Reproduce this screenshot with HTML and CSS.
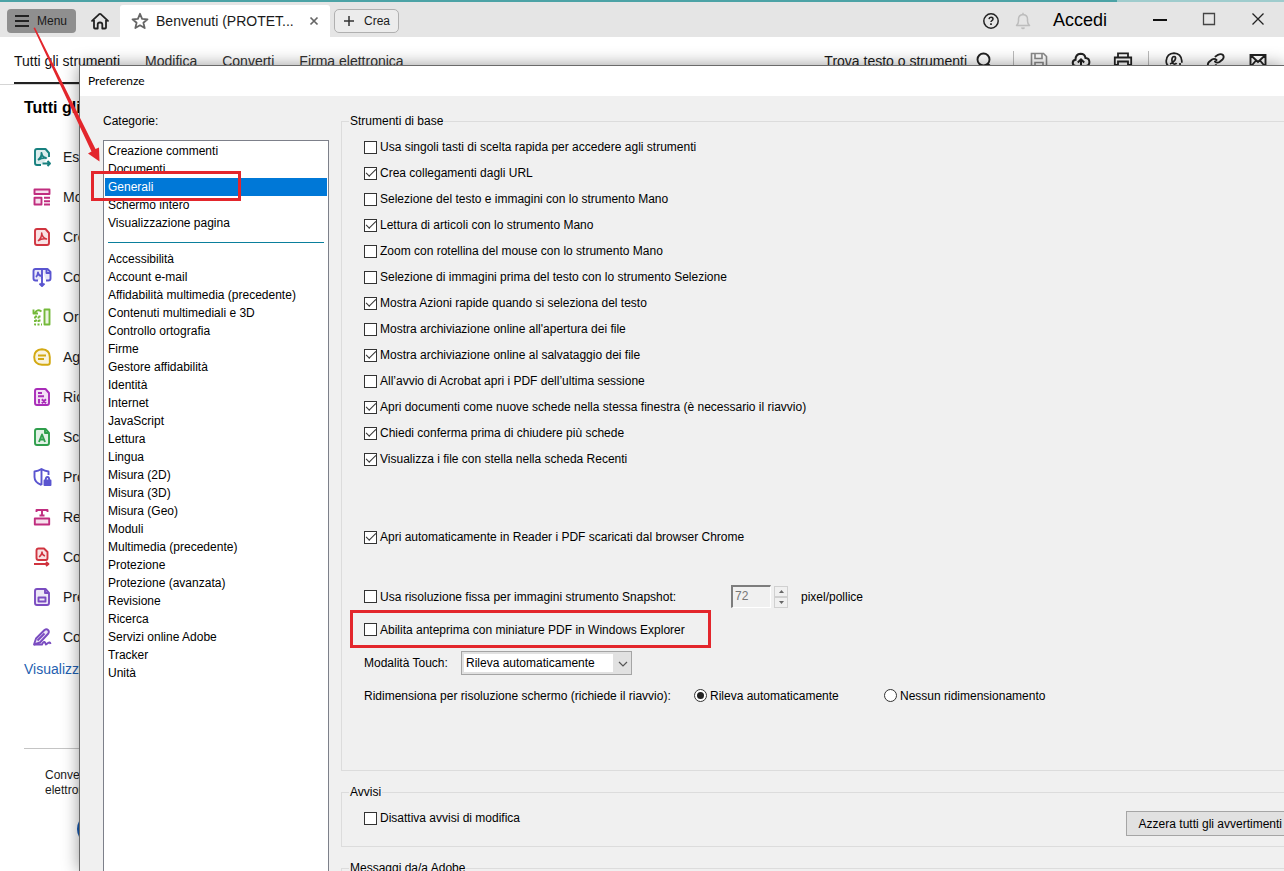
FILE: index.html
```html
<!DOCTYPE html>
<html lang="it">
<head>
<meta charset="utf-8">
<title>Preferenze</title>
<link rel="stylesheet" href="styles.css">
</head>
<body>
<div class="app">
  <div class="accent"><span class="accent-light"></span></div>
  <header class="titlebar">
    <button class="menu-btn" type="button">
      <svg width="16" height="12" viewBox="0 0 16 12"><path d="M1 1h14M1 6h14M1 11h14" stroke="#222" stroke-width="1.8"/></svg>
      Menu
    </button>
    <button class="icon-btn home" type="button" aria-label="Home">
      <svg width="20" height="18" viewBox="0 0 20 18" fill="none" stroke="#222" stroke-width="1.8" stroke-linejoin="round" stroke-linecap="round"><path d="M2 8.800 9 2.300q1-.8 2 0l7 6.500M4 8v7.500q0 1 1 1h2.700v-4q0-2 2.300-2t2.300 2v4H15q1 0 1-1V8"/></svg>
    </button>
    <div class="tab">
      <svg width="18" height="18" viewBox="0 0 18 18" fill="none" stroke="#666" stroke-width="1.8" stroke-linejoin="round"><path d="m9 1.800 2.100 5 5.400.5-4.100 3.500 1.300 5.300L9 13.300l-4.700 2.800 1.300-5.300L1.500 7.300l5.400-.5z"/></svg>
      <span class="tab-name">Benvenuti (PROTET...</span>
      <button class="icon-btn" type="button" aria-label="Chiudi scheda"><svg width="10" height="10" viewBox="0 0 10 10"><path d="m1.500 1.500 7 7m0-7-7 7" stroke="#666" stroke-width="1.700"/></svg></button>
    </div>
    <button class="create-btn" type="button">
      <svg width="12" height="12" viewBox="0 0 12 12"><path d="M6 1v10M1 6h10" stroke="#333" stroke-width="1.500"/></svg>
      Crea
    </button>
    <div class="window-tools">
      <button class="icon-btn" type="button" aria-label="Guida"><svg width="18" height="18" viewBox="0 0 18 18" fill="none" stroke="#222"><circle cx="9" cy="9" r="7.200" stroke-width="1.500"/><path d="M7 7.200q.2-1.900 2-1.900 2 0 2 1.700 0 1-1.100 1.600-.9.500-.9 1.500" stroke-width="1.500"/><path d="M9 11.300v1.600" stroke-width="1.700"/></svg></button>
      <button class="icon-btn" type="button" aria-label="Notifiche"><svg width="16" height="18" viewBox="0 0 16 18" fill="none" stroke="#bdbdbd" stroke-width="1.500" stroke-linejoin="round"><path d="M1.500 13.500q2-1.800 2-4.500V7q0-4 4.500-4.500Q12.500 3 12.500 7v2q0 2.700 2 4.500zM8 .8v1.700M6.500 15.500q1.500 1.800 3 0"/></svg></button>
      <a class="signin" href="#">Accedi</a>
      <button class="icon-btn win" type="button" aria-label="Riduci a icona"><svg width="14" height="14" viewBox="0 0 14 14"><path d="M0 8h14" stroke="#111" stroke-width="2"/></svg></button>
      <button class="icon-btn win" type="button" aria-label="Ingrandisci"><svg width="14" height="14" viewBox="0 0 14 14"><path d="M1.500 1.500h11v11h-11z" fill="none" stroke="#444" stroke-width="1.300"/></svg></button>
      <button class="icon-btn win" type="button" aria-label="Chiudi"><svg width="14" height="14" viewBox="0 0 14 14"><path d="m1.500 1.500 11 11m0-11-11 11" stroke="#222" stroke-width="1.300"/></svg></button>
    </div>
  </header>
  <nav class="toolbar">
    <a class="tool-link active" href="#">Tutti gli strumenti</a>
    <a class="tool-link" href="#">Modifica</a>
    <a class="tool-link" href="#">Converti</a>
    <a class="tool-link" href="#">Firma elettronica</a>
    <div class="search"><span>Trova testo o strumenti</span>
      <svg width="20" height="20" viewBox="0 0 20 20" fill="none" stroke="#222" stroke-width="1.900"><circle cx="9.500" cy="8.500" r="6"/><path d="m13.500 12.500 5 5"/></svg>
    </div>
    <div class="quick first">
      <svg width="20" height="20" viewBox="0 0 20 20" fill="none" stroke="#8a8a8a" stroke-width="1.600"><path d="M2.500 2.500h12l3 3v12h-15zM6 2.500v5h7v-5M6 17.500v-6h8v6"/></svg>
      <svg width="20" height="20" viewBox="0 0 20 20" fill="none" stroke="#222" stroke-width="2"><path d="M6.500 15H5q-3 0-3.300-3 0-2.700 2.800-3.200 0-5.600 5-6 4.300 0 5 4.200 3.800.2 3.900 4 0 3.800-3.600 4h-1.300M10 18V8.500M6.800 11.500 10 8.300l3.200 3.200"/></svg>
      <svg width="20" height="20" viewBox="0 0 20 20" fill="none" stroke="#222" stroke-width="1.800"><path d="M5 6.500V2.300h10v4.200M5 14H1.800V6.500h16.400V14H15M5 10.500h10v7H5z"/></svg>
    </div>
    <div class="quick">
      <svg width="20" height="20" viewBox="0 0 20 20" fill="none" stroke="#222" stroke-width="1.700"><path d="M6 16Q2 14 2.200 9.800 3 2.500 10 2.200q7 .3 7.800 7.600v2"/><path d="M6 13q3-1 5-4 1.500-3.500-1-3.500-2.500.5-2 4.500.5 3.500 3 3 1 0 1.500-1"/><path d="M13 15h6m-3-3v6"/></svg>
      <svg width="20" height="20" viewBox="0 0 20 20" fill="none" stroke="#222" stroke-width="1.900" stroke-linecap="round"><path d="m9.500 5.500 2.500-1.700q3-1.500 5 .2 1.500 2.500-.5 4.500l-3 2.500q-2.500 1.500-4.500-.5M10 14l-2.500 1.700q-3 1.500-5-.3-1.500-2.400.5-4.400l3-2.500q2.500-1.500 4.500.5"/></svg>
      <svg width="20" height="20" viewBox="0 0 20 20" fill="none" stroke="#222" stroke-width="1.900"><path d="M2.500 4h15v12h-15zM2.500 4l7.500 7 7.500-7M2.500 16l5.500-6.500M17.500 16 12 9.500"/></svg>
    </div>
  </nav>
  <aside class="sidebar">
    <h2 class="side-title">Tutti gli</h2>
    <ul class="tools">
      <li class="teal"><svg class="ico" viewBox="0 0 20 20"><path class="tint" d="M17 10V6l-3.500-4H5Q3 2 3 4v12q0 2 2 2h4"/><path d="M6 13q4-3 3.500-7Q10 10 14 11q-4-.5-8 2M10.500 16.500H18m-2.500-2.500 2.500 2.500-2.500 2.500"/></svg>Esporta</li>
      <li class="magenta"><svg class="ico" viewBox="0 0 20 20"><path class="tint" d="M2.500 2.500h15v4.500h-15zM2.500 10.800h7v6.700h-7z"/><path d="M12 10.800h6M12 14.200h6M12 17.500h6"/></svg>Modifica</li>
      <li class="red"><svg class="ico" viewBox="0 0 20 20"><path class="tint" d="M5 2h8.500L17 6v10q0 2-2 2H5q-2 0-2-2V4q0-2 2-2z"/><path stroke-width="1.500" d="M6 14q4-3.500 3.700-8Q10 10.500 14.500 12 10 11 6 14"/></svg>Crea</li>
      <li class="indigo"><svg class="ico" viewBox="0 0 20 20"><path class="tint" d="M6 13.500H3.500q-2 0-2-2V4q0-2 2-2H10v9M14 13.500h2.500q2 0 2-2V5l-3-3H10"/><path d="M4 10q2-2 2-4.500 0 2.500 3 3.500M14.500 2v4h4M10 10v9M7.500 16.500l2.500 2.500 2.500-2.500"/></svg>Combina</li>
      <li class="green"><svg class="ico" viewBox="0 0 20 20"><path class="tint" d="M12.500 2.500h5v15h-5z"/><path d="M9.500 4.500Q5 1.500 3 6M1.500 2.500V6.500h4.500"/><path stroke-dasharray="2 1.500" d="M3 9.500v8h7M3 9.500h7M3 13.500h7m-3.500-4v8"/></svg>Organizza</li>
      <li class="yellow"><svg class="ico" viewBox="0 0 20 20"><path class="tint" d="M10 2.300q7.800.5 7.800 7.700v5.700q0 2-2 2H10q-7.800-.5-7.800-7.700T10 2.300z"/><path d="M6 8.500h8M6 12h6"/></svg>Aggiungi</li>
      <li class="purple"><svg class="ico" viewBox="0 0 20 20"><path class="tint" d="M5 2h8.500L17 6v10q0 2-2 2H5q-2 0-2-2V4q0-2 2-2z"/><path d="M6 6h4M6 9.200h6"/><path d="M7 12v4.500M9.800 12.200l4.200 4m0-4-4.200 4"/></svg>Richiedi</li>
      <li class="emerald"><svg class="ico" viewBox="0 0 20 20"><path class="tint" d="M5 2h8.500L17 6v10q0 2-2 2H5q-2 0-2-2V4q0-2 2-2z"/><path d="M13 2v4h4M7 15l3-7.500L13 15m-5-2.500h4"/></svg>Scansiona</li>
      <li class="indigo"><svg class="ico" viewBox="0 0 20 20"><path d="M9.500 18Q2.500 15.500 2.500 10V4.500Q6.500 4 9.500 2q3 2 7 2.500V8M9.500 2v16"/><path fill="currentColor" d="M12.500 13.500h6V18h-6z"/><path d="M13.700 13q0-3 1.800-3t1.700 3"/></svg>Proteggi</li>
      <li class="magenta"><svg class="ico" viewBox="0 0 20 20"><path class="tint" d="M2.800 11.500h14.400v6H2.800z"/><path d="M4.500 5V3h11v2M10 3v5.500M7.500 8.500h5"/></svg>Redigi</li>
      <li class="red"><svg class="ico" viewBox="0 0 20 20"><path class="tint" d="M6.500 1.500H12l3.500 3.500v6q0 2-1.500 2H6.500q-2 0-2-2V3.500q0-2 2-2z"/><path stroke-width="1.500" d="M7 10q3-2 3-5 0 3 3 4"/><path d="M2 17h15m-3-2 2.500 2-2.500 2"/></svg>Comprimi</li>
      <li class="violet"><svg class="ico" viewBox="0 0 20 20"><path class="tint" d="M5 2h8.500L17 6v10q0 2-2 2H5q-2 0-2-2V4q0-2 2-2z"/><path d="M13 2v4h4M6.500 10.500h7v4h-7z"/></svg>Prepara</li>
      <li class="violet"><svg class="ico" viewBox="0 0 20 20"><path class="tint" d="m2 17.500 2-6L12.500 3q2-1.500 3.500 0t.3 3.500L8 15.500z"/><path d="m5.500 13.500 7-7M2 17.500h8q2-4 3-2t1 2 2-1.500 2.500 1"/></svg>Compila</li>
    </ul>
    <a class="more" href="#">Visualizza</a>
    <div class="promo">
      <p>Converti<br>elettronica</p>
      <button class="promo-btn" type="button" aria-label="Prova"></button>
    </div>
  </aside>

  <section class="dialog" role="dialog" aria-labelledby="dlg-title">
    <h1 class="dialog-title" id="dlg-title">Preferenze</h1>
    <div class="dialog-body">
      <div class="categories">
        <div class="cat-label" id="cat-label">Categorie:</div>
        <ul class="listbox" role="listbox" aria-labelledby="cat-label">
          <li role="option">Creazione commenti</li>
          <li role="option">Documenti</li>
          <li role="option" class="selected" aria-selected="true">Generali</li>
          <li role="option">Schermo intero</li>
          <li role="option">Visualizzazione pagina</li>
          <li class="separator" role="presentation"></li>
          <li role="option">Accessibilità</li>
          <li role="option">Account e-mail</li>
          <li role="option">Affidabilità multimedia (precedente)</li>
          <li role="option">Contenuti multimediali e 3D</li>
          <li role="option">Controllo ortografia</li>
          <li role="option">Firme</li>
          <li role="option">Gestore affidabilità</li>
          <li role="option">Identità</li>
          <li role="option">Internet</li>
          <li role="option">JavaScript</li>
          <li role="option">Lettura</li>
          <li role="option">Lingua</li>
          <li role="option">Misura (2D)</li>
          <li role="option">Misura (3D)</li>
          <li role="option">Misura (Geo)</li>
          <li role="option">Moduli</li>
          <li role="option">Multimedia (precedente)</li>
          <li role="option">Protezione</li>
          <li role="option">Protezione (avanzata)</li>
          <li role="option">Revisione</li>
          <li role="option">Ricerca</li>
          <li role="option">Servizi online Adobe</li>
          <li role="option">Tracker</li>
          <li role="option">Unità</li>
        </ul>
      </div>
      <div class="panels">
        <fieldset class="group basic">
          <legend>Strumenti di base</legend>
          <label class="check"><input type="checkbox">Usa singoli tasti di scelta rapida per accedere agli strumenti</label>
          <label class="check"><input type="checkbox" checked>Crea collegamenti dagli URL</label>
          <label class="check"><input type="checkbox">Selezione del testo e immagini con lo strumento Mano</label>
          <label class="check"><input type="checkbox" checked>Lettura di articoli con lo strumento Mano</label>
          <label class="check"><input type="checkbox">Zoom con rotellina del mouse con lo strumento Mano</label>
          <label class="check"><input type="checkbox">Selezione di immagini prima del testo con lo strumento Selezione</label>
          <label class="check"><input type="checkbox" checked>Mostra Azioni rapide quando si seleziona del testo</label>
          <label class="check"><input type="checkbox">Mostra archiviazione online all'apertura dei file</label>
          <label class="check"><input type="checkbox" checked>Mostra archiviazione online al salvataggio dei file</label>
          <label class="check"><input type="checkbox">All’avvio di Acrobat apri i PDF dell’ultima sessione</label>
          <label class="check"><input type="checkbox" checked>Apri documenti come nuove schede nella stessa finestra (è necessario il riavvio)</label>
          <label class="check"><input type="checkbox" checked>Chiedi conferma prima di chiudere più schede</label>
          <label class="check"><input type="checkbox" checked>Visualizza i file con stella nella scheda Recenti</label>
          <label class="check chrome"><input type="checkbox" checked>Apri automaticamente in Reader i PDF scaricati dal browser Chrome</label>
          <div class="row">
            <label class="check snapshot"><input type="checkbox">Usa risoluzione fissa per immagini strumento Snapshot:</label>
            <input class="number" id="dpi" type="text" value="72" disabled>
            <span class="spinner">
              <button type="button" disabled aria-label="Aumenta"><svg width="5" height="3" viewBox="0 0 5 3"><path d="M0 3h5L2.500 0z" fill="#666"/></svg></button>
              <button type="button" disabled aria-label="Diminuisci"><svg width="5" height="3" viewBox="0 0 5 3"><path d="M0 0h5L2.500 3z" fill="#666"/></svg></button>
            </span>
            <label class="unit" for="dpi">pixel/pollice</label>
          </div>
          <div class="row"><label class="check marked"><input type="checkbox">Abilita anteprima con miniature PDF in Windows Explorer</label></div>
          <div class="row">
            <label class="touch-label" for="touch">Modalità Touch:</label>
            <span class="combo">
              <select id="touch"><option>Rileva automaticamente</option></select>
              <svg class="chevron" width="10" height="6" viewBox="0 0 10 6"><path d="m1 1 4 4 4-4" fill="none" stroke="#555" stroke-width="1.200"/></svg>
            </span>
          </div>
          <div class="row">
            <span class="scale-label">Ridimensiona per risoluzione schermo (richiede il riavvio):</span>
            <label class="check auto"><input type="radio" name="scale" checked>Rileva automaticamente</label>
            <label class="check"><input type="radio" name="scale">Nessun ridimensionamento</label>
          </div>
        </fieldset>
        <fieldset class="group warnings">
          <legend>Avvisi</legend>
          <label class="check"><input type="checkbox">Disattiva avvisi di modifica</label>
          <button class="reset-btn" type="button">Azzera tutti gli avvertimenti</button>
        </fieldset>
        <fieldset class="group messages">
          <legend>Messaggi da/a Adobe</legend>
        </fieldset>
      </div>
    </div>
  </section>
  <svg class="arrow" width="110" height="170" viewBox="0 0 110 170"><path d="m33.500 28 1.500-.5 60.500 121.500 3.500-1.500.5 14-11.500-8 3.500-2z" fill="#e3262c"/></svg>
</div>
</body>
</html>
```
FILE: styles.css
```css
* { box-sizing: border-box; }

body {
  margin: 0;
  font-family: "Liberation Sans", Arial, sans-serif;
  font-size: 12px;
  color: #1a1a1a;
  background: #fff;
}

button, input, select { font: inherit; color: inherit; }
ul { list-style: none; margin: 0; padding: 0; }
a { color: inherit; text-decoration: none; }
svg { display: block; flex: none; }

.app {
  position: relative;
  display: flex;
  flex-direction: column;
  height: 100vh;
  overflow: hidden;
}

.accent { display: flex; justify-content: flex-end; flex: none; height: 2px; background: #4ca3a6; }
.accent-light { width: 13%; background: #9fcccd; }

/* Title bar */
.titlebar {
  display: flex;
  align-items: center;
  flex: none;
  height: 35px;
  padding: 2px 0 0 7px;
  background: #e5e5e5;
}

.icon-btn { display: flex; padding: 0; border: 0; background: none; }

.menu-btn {
  display: flex;
  align-items: center;
  gap: 7px;
  height: 24px;
  padding: 0 9px 0 7px;
  border: 0;
  border-radius: 4px;
  background: #8f8f8f;
}

.home { margin: 0 10px 0 14px; }

.tab {
  display: flex;
  align-items: center;
  align-self: stretch;
  width: 210px;
  margin-top: 1px;
  padding: 0 11px;
  border-radius: 3px 3px 0 0;
  background: #fff;
}
.tab-name { flex: 1; margin-left: 7px; font-size: 14px; white-space: nowrap; }

.create-btn {
  display: flex;
  align-items: center;
  gap: 9px;
  height: 24px;
  margin-left: 4px;
  padding: 0 8px;
  border: 1px solid #b0b0b0;
  border-radius: 5px;
  background: #ececec;
}

.window-tools { display: flex; align-items: center; margin-left: auto; padding-right: 19px; }
.window-tools .icon-btn + .icon-btn { margin-left: 15px; }
.signin { margin: 0 46px 0 22px; font-size: 18px; color: #000; }
.window-tools .win { padding-bottom: 4px; }
.window-tools .win + .win { margin-left: 35px; }

/* Toolbar */
.toolbar {
  display: flex;
  align-items: flex-start;
  flex: none;
  gap: 25px;
  height: 48px;
  padding: 0 16px 0 14px;
  border-bottom: 1px solid #d5d5d5;
  font-size: 14px;
  line-height: 16px;
  white-space: nowrap;
}
.tool-link { padding-top: 16px; color: #333; }
.tool-link.active { height: 47px; border-bottom: 2px solid #222; color: #111; }
.search { display: flex; gap: 7px; margin-left: auto; padding-top: 14px; }
.search span { padding-top: 2px; }
.quick { display: flex; gap: 22px; margin-top: 14px; padding-left: 15px; margin-left: -10px; border-left: 1px solid #bbb; }
.quick.first { margin-left: -6px; }

/* Sidebar */
.sidebar { width: 79px; padding: 14px 0 0 24px; overflow: hidden; }
.side-title { margin: 0; font-size: 16px; line-height: 18px; color: #000; white-space: nowrap; }
.tools { padding-top: 20px; }
.tools li {
  display: flex;
  align-items: center;
  gap: 11px;
  height: 40px;
  padding-left: 8px;
  font-size: 14px;
  white-space: nowrap;
}
.ico { width: 20px; height: 20px; fill: none; stroke: currentColor; stroke-width: 1.9; stroke-linejoin: round; }
.ico .tint { fill: currentColor; fill-opacity: 0.14; }
.teal .ico { color: #17807f; }
.magenta .ico { color: #c02d7f; }
.red .ico { color: #d0343f; }
.indigo .ico { color: #5a55d0; }
.green .ico { color: #74b93a; }
.yellow .ico { color: #d3a912; }
.purple .ico { color: #a82cb8; }
.emerald .ico { color: #2f9e4c; }
.violet .ico { color: #7a4cc0; }
.more { display: block; padding-top: 4px; font-size: 14px; line-height: 16px; color: #1f5fb0; }
.promo { margin-top: 71px; padding: 19px 0 0 21px; border-top: 1px solid #c4c4c4; }
.promo p { margin: 0; line-height: 15px; }
.promo-btn { width: 90px; height: 32px; margin: 15px 0 0 32px; border: 0; border-radius: 16px; background: #1558b0; }

/* Preferences window */
.dialog {
  position: absolute;
  inset: 65px 0 0 79px;
  display: flex;
  flex-direction: column;
  overflow: hidden;
  border: solid #6a6a6a;
  border-width: 1px 0 0 1px;
  background: #f0f0f0;
  box-shadow: 0 0 16px rgba(0, 0, 0, 0.4);
  color: #000;
}
.dialog-title {
  flex: none;
  margin: 0;
  padding: 0 8px;
  background: #fff;
  font: 12px/30px Lato, "Open Sans", sans-serif;
}
.dialog-body { display: flex; flex: 1; gap: 12px; padding: 18px 0 0 23px; }

.categories { display: flex; flex-direction: column; width: 226px; }
.cat-label { line-height: 14px; padding-bottom: 12px; }
.listbox {
  flex: 1;
  padding: 1px;
  border: 1px solid #7d808a;
  border-bottom: 0;
  background: #fff;
  line-height: 18px;
}
.listbox li { height: 18px; padding: 0 3px; }
.listbox .selected { position: relative; background: #0078d7; color: #fff; }
.listbox .separator::before {
  content: "";
  display: block;
  height: 10px;
  border-bottom: 1px solid #0a7f9c;
}

.panels { flex: 1; margin-right: -12px; }
.group { margin: 0 0 14px; padding: 6px 22px 0; border: 1px solid #dcdcdc; }
.group legend { margin-left: -15px; padding: 0 1px; line-height: 14px; }
.basic { padding-bottom: 58px; }
.warnings { display: flex; align-items: flex-start; justify-content: space-between; padding-right: 0; padding-bottom: 10px; }
.messages { padding-bottom: 40px; }

.check { display: flex; align-items: center; gap: 3px; height: 26px; white-space: nowrap; }
.check input {
  appearance: none;
  flex: none;
  display: grid;
  place-items: center;
  width: 13px;
  height: 13px;
  margin: 0;
  border: 1px solid #333;
  background: #fff;
}
.check input[type="checkbox"]:checked::before {
  content: "";
  width: 9px;
  height: 4px;
  margin-bottom: 3px;
  border: solid #333;
  border-width: 0 0 1px 1px;
  rotate: -45deg;
}
.check input[type="radio"] { border-radius: 50%; }
.check input[type="radio"]:checked::before {
  content: "";
  width: 7px;
  height: 7px;
  border-radius: 50%;
  background: #222;
}

.chrome { margin: 52px 0 30px; }
.row { display: flex; align-items: center; height: 33px; white-space: nowrap; }
.snapshot { width: 367px; }
.number {
  width: 40px;
  height: 23px;
  padding: 0 2px 3px;
  border: solid;
  border-width: 2px 1px 1px 2px;
  border-color: #7d7d7d #fff #fff #7d7d7d;
  background: #f0f0f0;
  color: #777;
}
.spinner { display: flex; flex-direction: column; width: 14px; margin: 0 13px 0 3px; }
.spinner button {
  display: grid;
  place-items: center;
  height: 11px;
  padding: 0;
  border: 1px solid #d0d0d0;
  background: #f0f0f0;
}
.marked { position: relative; }
.marked::after, .selected::after {
  content: "";
  position: absolute;
  border: 3px solid #e3262c;
}
.marked::after { inset: -7px -26px -5px -14px; }
.selected::after { inset: -7px 86px -5px -14px; }

.touch-label { width: 97px; }
.combo { position: relative; }
.combo select {
  appearance: none;
  width: 171px;
  height: 24px;
  padding: 0 4px;
  border: 1px solid #a5a5a5;
  border-radius: 0;
  background: linear-gradient(#fff, #fff) 2px 2px / 149px 18px no-repeat #e1e1e1;
}
.chevron { position: absolute; right: 4px; top: 10px; }
.scale-label { width: 330px; }
.auto { width: 190px; }
.reset-btn {
  height: 25px;
  margin-top: 6px;
  padding: 0 12px;
  border: 1px solid #a5a5a5;
  background: #e1e1e1;
  white-space: nowrap;
}

.arrow { position: absolute; left: 0; top: 0; pointer-events: none; }
```
